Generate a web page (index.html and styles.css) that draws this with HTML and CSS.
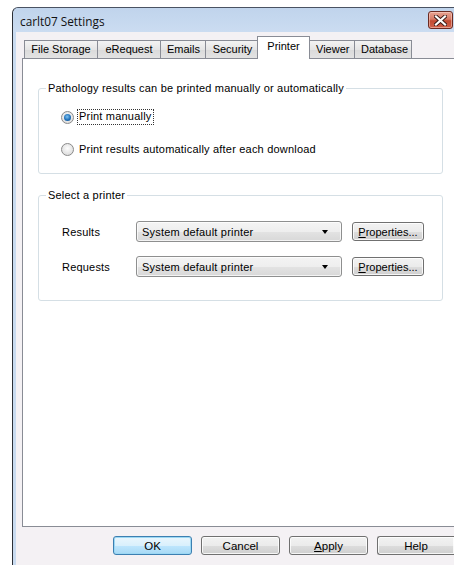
FILE: index.html
```html
<!DOCTYPE html>
<html lang="en">
<head>
<meta charset="utf-8">
<title>carlt07 Settings</title>
<link rel="stylesheet" href="styles.css">
</head>
<body>
<div class="window">
  <div class="titlebar">
    <span class="title">carlt07 Settings</span>
    <button class="close" aria-label="Close">
      <svg width="13" height="11" viewBox="0 0 13 11">
        <path d="M2 1.5 L11 9.5 M11 1.5 L2 9.5" stroke="#3b1a16" stroke-width="4" stroke-linecap="square"/>
        <path d="M2 1.5 L11 9.5 M11 1.5 L2 9.5" stroke="#ffffff" stroke-width="2.2" stroke-linecap="square"/>
      </svg>
    </button>
  </div>
  <div class="client">
    <div class="tabs">
      <div class="tab tab-storage">File Storage</div>
      <div class="tab tab-erequest">eRequest</div>
      <div class="tab tab-emails">Emails</div>
      <div class="tab tab-security">Security</div>
      <div class="tab tab-printer active">Printer</div>
      <div class="tab tab-viewer">Viewer</div>
      <div class="tab tab-database">Database</div>
    </div>
    <div class="page">
      <fieldset class="group group-mode">
        <legend>Pathology results can be printed manually or automatically</legend>
        <label class="radio-row"><span class="radio checked"></span><span class="focus">Print manually</span></label>
        <label class="radio-row"><span class="radio"></span><span class="radio-text">Print results automatically after each download</span></label>
      </fieldset>
      <fieldset class="group group-printer">
        <legend>Select a printer</legend>
        <div class="printer-row">
          <span class="row-label">Results</span>
          <div class="combo"><span>System default printer</span><span class="arrow"></span></div>
          <button class="btn props"><u>P</u>roperties...</button>
        </div>
        <div class="printer-row">
          <span class="row-label">Requests</span>
          <div class="combo"><span>System default printer</span><span class="arrow"></span></div>
          <button class="btn props"><u>P</u>roperties...</button>
        </div>
      </fieldset>
    </div>
    <div class="buttons">
      <button class="btn dlg default">OK</button>
      <button class="btn dlg">Cancel</button>
      <button class="btn dlg"><u>A</u>pply</button>
      <button class="btn dlg last">Help</button>
    </div>
  </div>
</div>
</body>
</html>
```
FILE: styles.css
```css
html, body {
  margin: 0;
  padding: 0;
}

body {
  width: 454px;
  height: 565px;
  overflow: hidden;
  background: #ffffff;
  font-family: "Liberation Sans", Arial, sans-serif;
  font-size: 11px;
  color: #000;
}

/* Window frame (its right part is cut off by the viewport) */
.window {
  margin: 7px 0 0 12px;
  width: 442px;
  height: 558px;
  border-top: 1px solid #4a5362;
  border-left: 1px solid #2c2f36;
  border-radius: 6px 0 0 0;
  background: #c9dbf0;
  display: flex;
  flex-direction: column;
  box-sizing: border-box;
}

.titlebar {
  height: 24px;
  flex: none;
  display: flex;
  align-items: flex-start;
  background: linear-gradient(#c0d4ec, #cbdcf1);
  border-radius: 6px 0 0 0;
}

.title {
  font-family: "Open Sans", "Noto Sans", sans-serif;
  font-size: 11.8px;
  margin: 5px 0 0 7px;
  color: #111;
}

.close {
  margin: 3px 1px 0 auto;
  width: 25px;
  height: 18px;
  padding: 0;
  border: 1px solid #6b2a22;
  border-radius: 3px;
  background: linear-gradient(#e8a493 0%, #d77a66 45%, #c24a32 55%, #d0604a 100%);
  display: flex;
  align-items: center;
  justify-content: center;
  box-shadow: inset 0 0 0 1px rgba(255, 220, 210, 0.5);
}

.client {
  flex: 1;
  margin-left: 3px;
  background: #f4f1f4;
  padding-top: 4px;
}

/* Tabs */
.tabs {
  display: flex;
  align-items: flex-end;
  height: 22px;
  padding-left: 8px;
  position: relative;
  z-index: 1;
}

.tab {
  height: 17px;
  line-height: 17px;
  padding: 0 6px;
  border: 1px solid #898c95;
  border-bottom: none;
  margin-right: -1px;
  background: linear-gradient(#f3f3f3, #e5e5e5 50%, #dadada 51%, #e3e3e3);
  text-align: center;
}

.tab-storage { width: 60px; }
.tab-erequest { width: 50px; }
.tab-emails { width: 32px; }
.tab-security { width: 41px; }
.tab-viewer { width: 32px; }
.tab-database { width: 44px; }

.tab.active {
  height: 22px;
  line-height: 18px;
  width: 37px;
  margin: 0 -1px -1px -2px;
  padding: 0 7px;
  background: #ffffff;
  position: relative;
}

/* Tab page */
.page {
  margin-left: 6px;
  height: 467px;
  border: 1px solid #898c95;
  border-right: none;
  background: #ffffff;
  padding: 0 0 0 15px;
  letter-spacing: 0.2px;
}

.group {
  margin: 0;
  width: 405px;
  box-sizing: border-box;
  border: 1px solid #d5dfe5;
  border-radius: 3px;
  padding: 0 0 0 23px;
}

.group legend {
  padding: 0 2px;
  margin-left: -16px;
  line-height: 13px;
}

.group-mode {
  margin-top: 23px;
  height: 92px;
  padding-top: 14px;
}

.group-printer {
  margin-top: 15px;
  height: 112px;
  padding-top: 19px;
}

/* Radio buttons */
.radio-row {
  display: flex;
  align-items: center;
  height: 16px;
  margin-left: -1px;
}

.radio-row + .radio-row {
  margin-top: 16px;
}

.radio {
  width: 11px;
  height: 11px;
  border: 1px solid #8a8a8a;
  border-radius: 50%;
  background: radial-gradient(circle at 50% 40%, #fdfdfd, #dcdcdc 80%);
  display: flex;
  align-items: center;
  justify-content: center;
  margin-right: 5px;
}

.radio.checked::after {
  content: "";
  width: 7px;
  height: 7px;
  border-radius: 50%;
  background: radial-gradient(circle at 45% 40%, #7fc4f2, #1f6fb8 55%, #0d4a8a);
}

.focus {
  outline: 1px dotted #333;
  padding: 0 1px 1px 1px;
  margin-left: -1px;
  line-height: 13px;
}

/* Printer selection rows */
.printer-row {
  display: flex;
  align-items: center;
  height: 21px;
}

.printer-row + .printer-row {
  margin-top: 14px;
}

.row-label {
  width: 74px;
}

.combo {
  width: 206px;
  height: 21px;
  box-sizing: border-box;
  border: 1px solid #8e8f8f;
  border-radius: 3px;
  background: linear-gradient(#f4f4f4, #eeeeee 50%, #e3e3e3 51%, #d8d8d8);
  display: flex;
  align-items: center;
  padding: 0 0 0 5px;
  box-shadow: inset 0 0 0 1px rgba(255, 255, 255, 0.7);
}

.combo span:first-child {
  flex: 1;
}

.arrow {
  width: 0;
  height: 0;
  border-left: 3.5px solid transparent;
  border-right: 3.5px solid transparent;
  border-top: 4px solid #000;
  margin-right: 13px;
}

/* Buttons */
.btn {
  font: inherit;
  color: #000;
  border: 1px solid #707070;
  border-radius: 3px;
  background: linear-gradient(#f2f2f2, #ebebeb 50%, #dddddd 51%, #cfcfcf);
  box-shadow: inset 0 0 0 1px rgba(255, 255, 255, 0.8);
  padding: 0;
  height: 20px;
  letter-spacing: 0;
}

.btn u {
  text-decoration: underline;
}

.props {
  width: 72px;
  height: 19px;
  margin-left: 10px;
}

.buttons {
  display: flex;
  padding: 9px 0 0 97px;
  gap: 9px;
}

.dlg {
  width: 79px;
  height: 19px;
  font-size: 11.5px;
}

.dlg.last {
  width: 77px;
  border-right: none;
  border-radius: 3px 0 0 3px;
}

.dlg.default {
  border-color: #3c7fb1;
  box-shadow: inset 0 0 0 1px #9cd8f4;
  background: linear-gradient(#eaf6fd, #d9f0fc 50%, #bee6fd 51%, #a7d9f5);
}
```
